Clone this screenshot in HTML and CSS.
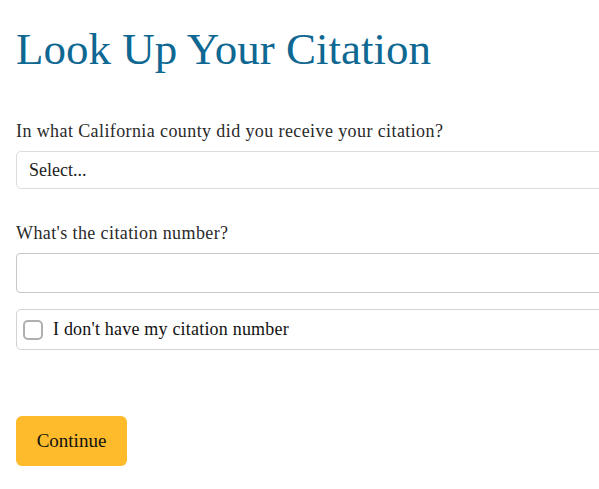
FILE: index.html
```html
<!DOCTYPE html>
<html lang="en">
<head>
<meta charset="utf-8">
<title>Look Up Your Citation</title>
<link rel="stylesheet" href="styles.css">
</head>
<body>
<main class="page">
  <h1 class="title">Look Up Your Citation</h1>
  <form class="form">
    <div class="field">
      <label class="label" for="county">In what California county did you receive your citation?</label>
      <div class="select" id="county">Select...</div>
    </div>
    <div class="field">
      <label class="label" for="num">What's the citation number?</label>
      <input class="input" id="num" type="text">
    </div>
    <label class="check">
      <span class="box"></span>
      <span class="check-text">I don't have my citation number</span>
    </label>
    <div class="actions">
      <button class="btn" type="button">Continue</button>
    </div>
  </form>
</main>
</body>
</html>
```

FILE: styles.css
```css
html, body {
  margin: 0;
  padding: 0;
  overflow: hidden;
  background: #fff;
}
body {
  font-family: "Liberation Serif", "DejaVu Serif", serif;
  color: #222;
}
.page {
  padding: 0 0 0 16px;
  width: 640px;
}
.title {
  margin: 23px 0 0 0;
  font-size: 45px;
  font-weight: 400;
  line-height: 52px;
  color: #0e6892;
}
.form {
  margin-top: 45px;
  display: flex;
  flex-direction: column;
}
.field {
  display: flex;
  flex-direction: column;
}
.label {
  font-size: 18px;
  letter-spacing: 0.4px;
  line-height: 22px;
  margin-bottom: 9px;
  color: #2a2a2a;
}
.select {
  box-sizing: border-box;
  height: 38px;
  border: 1px solid #dcdcdc;
  border-radius: 5px;
  padding: 0 12px;
  display: flex;
  align-items: center;
  font-size: 18px;
  color: #222;
  margin-bottom: 33px;
}
.input {
  box-sizing: border-box;
  height: 40px;
  border: 1px solid #c8c8c8;
  border-radius: 4px;
  margin: 0 0 16px 0;
  width: 100%;
}
.check {
  box-sizing: border-box;
  height: 41px;
  border: 1px solid #d0d4d8;
  border-radius: 5px;
  display: flex;
  align-items: center;
  padding-left: 6px;
  gap: 10px;
}
.box {
  box-sizing: border-box;
  width: 20px;
  height: 20px;
  border: 2px solid #b0b0b0;
  border-radius: 5px;
}
.check-text {
  font-size: 18px;
  letter-spacing: 0.2px;
  color: #111;
}
.actions {
  margin-top: 66px;
}
.btn {
  width: 111px;
  height: 50px;
  border: none;
  border-radius: 6px;
  background: #febc2c;
  font-family: inherit;
  font-size: 19px;
  color: #111;
}
```
